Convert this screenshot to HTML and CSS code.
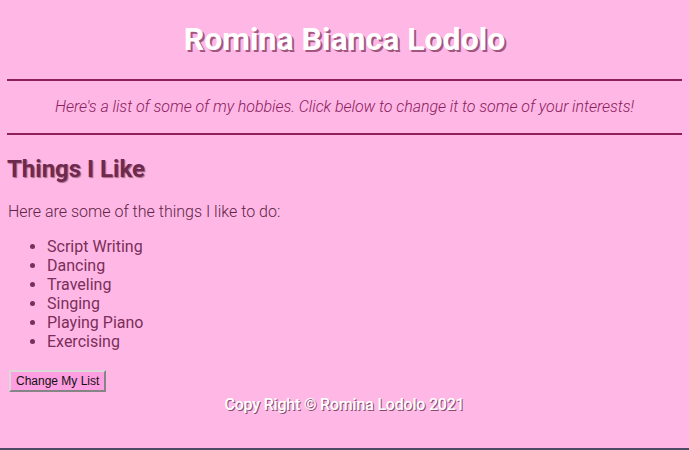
FILE: index.html
```html
<!DOCTYPE html>
<html lang="en">
<head>
<meta charset="utf-8">
<title>Romina Bianca Lodolo</title>
<link rel="stylesheet" href="styles.css">
</head>
<body>
<header class="masthead">
  <h1 class="title">Romina Bianca Lodolo</h1>
  <div class="rule"></div>
  <p class="intro">Here's a list of some of my hobbies. Click below to change it to some of your interests!</p>
  <div class="rule"></div>
</header>
<main class="content">
  <h2 class="section-title">Things I Like</h2>
  <p class="lead">Here are some of the things I like to do:</p>
  <ul class="hobbies">
    <li>Script Writing</li>
    <li>Dancing</li>
    <li>Traveling</li>
    <li>Singing</li>
    <li>Playing Piano</li>
    <li>Exercising</li>
  </ul>
  <button class="change-btn" type="button">Change My List</button>
</main>
<footer class="footer">Copy Right © Romina Lodolo 2021</footer>
</body>
</html>
```
FILE: styles.css
```css
html {
  background: #4d4a66;
  height: 100%;
}
body {
  margin: 0;
  padding: 0 7px 0 7px;
  height: 448px;
  box-sizing: border-box;
  background: #ffb8e5;
  font-family: Roboto, "Liberation Sans", sans-serif;
  overflow: hidden;
}
.masthead {
  display: flex;
  flex-direction: column;
}
.title {
  margin: 20px 0 0 0;
  height: 38px;
  line-height: 38px;
  text-align: center;
  font-size: 32px;
  font-weight: 700;
  color: #ffffff;
  text-shadow: 2px 2px 0 #a3557f;
}
.rule {
  height: 2px;
  background: #8e1f5c;
  margin-top: 21px;
}
.intro {
  margin: 0;
  padding: 16px 0 17px;
  text-align: center;
  font-size: 16px;
  line-height: 19px;
  font-style: italic;
  font-weight: 300;
  letter-spacing: -0.05px;
  color: #8a2060;
}
.intro + .rule {
  margin-top: 0;
}
.content {
  padding: 0 0 0 1px;
}
.section-title {
  margin: 20px 0 0 -1px;
  font-size: 24px;
  line-height: 28px;
  font-weight: 700;
  color: #6e2a4e;
  text-shadow: 1px 1px 1px #a86a8c;
}
.lead {
  margin: 19px 0 0 0;
  font-size: 16px;
  line-height: 19px;
  font-weight: 300;
  color: #5e2446;
}
.hobbies {
  margin: 16px 0 0 0;
  padding-left: 39px;
  font-size: 16px;
  line-height: 19px;
  color: #7a2e5a;
}
.change-btn {
  display: block;
  margin-top: 19px;
  margin-left: 1px;
  font-family: "Liberation Sans", Arial, sans-serif;
  font-size: 12px;
  white-space: nowrap;
  color: #111111;
  background: #ff9ee0;
  border: 2px outset #d9d9d9;
  padding: 2px 5px;
  height: 22px;
  line-height: 15px;
  cursor: pointer;
}
.footer {
  margin-top: 3px;
  text-align: center;
  font-size: 16px;
  line-height: 19px;
  font-weight: 500;
  letter-spacing: -0.2px;
  color: #ffffff;
  text-shadow: 1px 1px 0 #8a4a6e;
}
```
